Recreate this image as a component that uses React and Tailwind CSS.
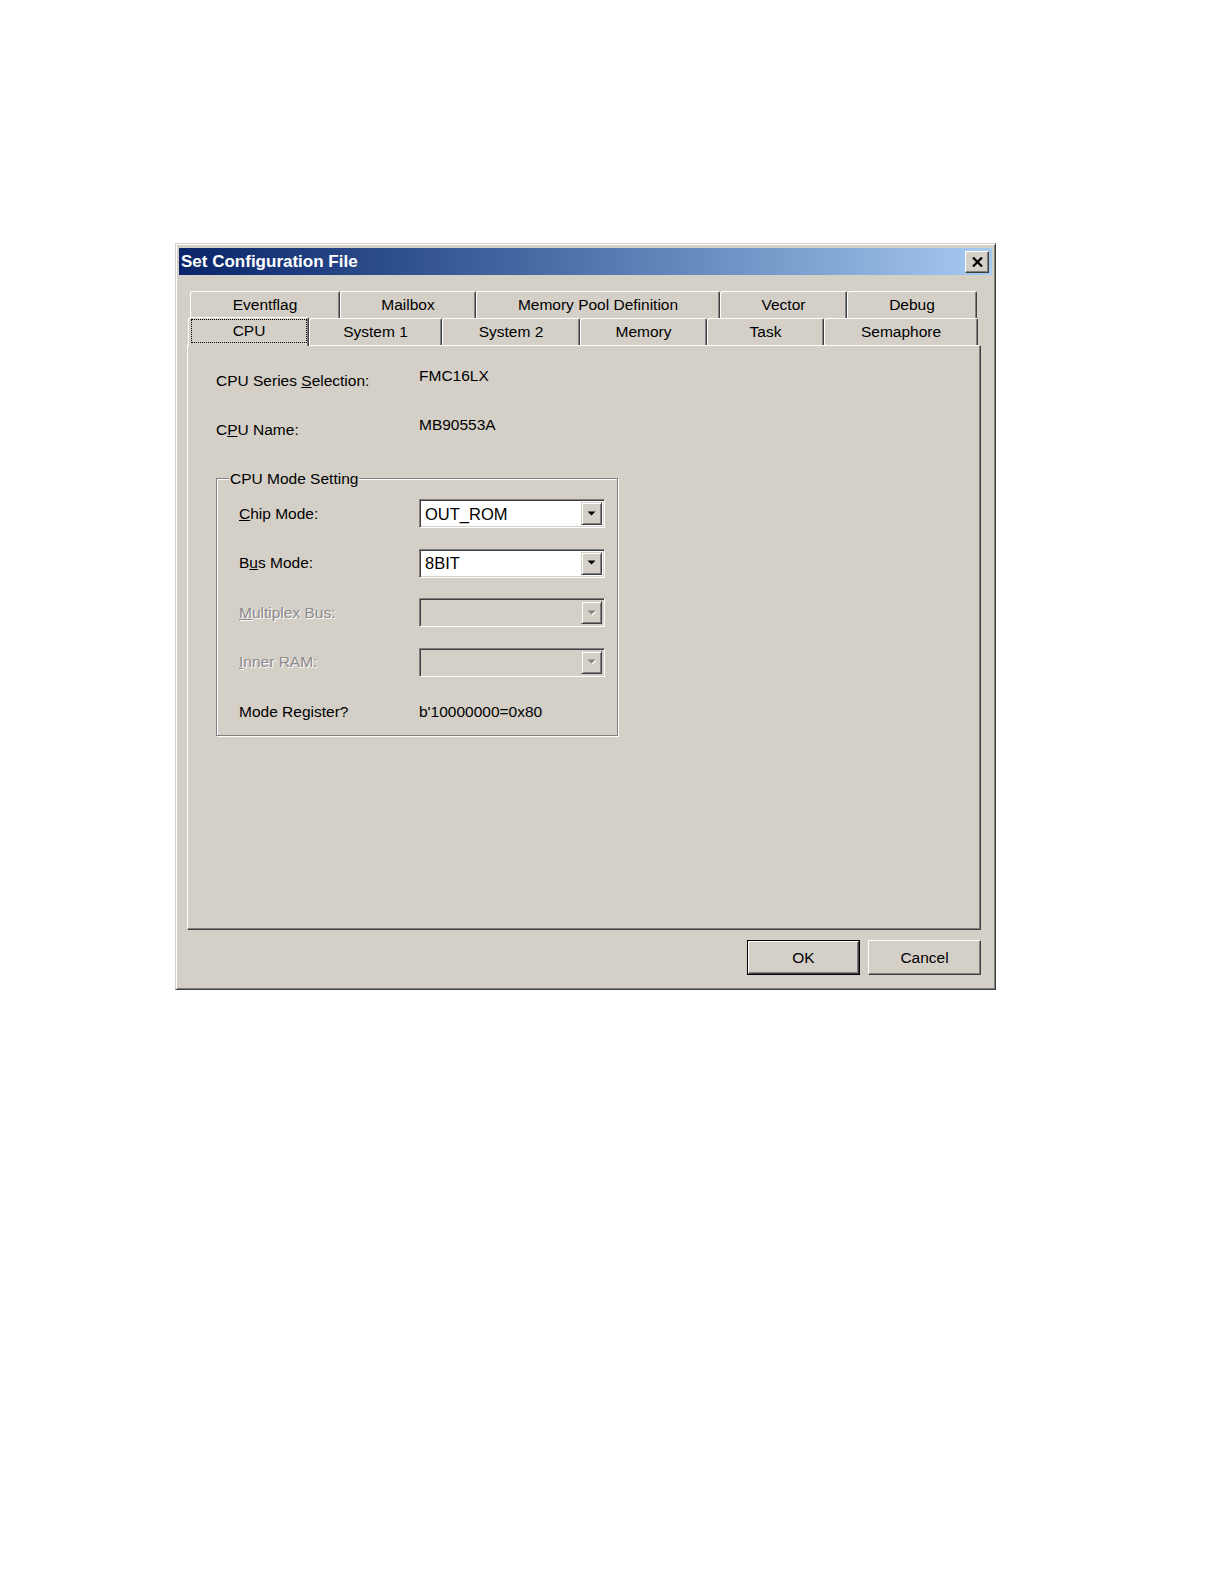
const ROW_BACK = [
  { label: 'Eventflag', w: 150 },
  { label: 'Mailbox', w: 136 },
  { label: 'Memory Pool Definition', w: 244 },
  { label: 'Vector', w: 127 },
  { label: 'Debug', w: 130 },
];

const ROW_FRONT = [
  { label: 'System 1', w: 133 },
  { label: 'System 2', w: 138 },
  { label: 'Memory', w: 127 },
  { label: 'Task', w: 117 },
  { label: 'Semaphore', w: 154 },
];

function Tab({ label, w }) {
  return (
    <div
      className="h-[27px] flex items-center justify-center border-t border-l border-r border-t-white border-l-white border-r-[#404040] rounded-tl-[3px] rounded-tr-[2px] shadow-[inset_-1px_0_0_#808080] bg-[#d4d0c8]"
      style={{ width: w }}
    >
      <span className="pb-[1px]">{label}</span>
    </div>
  );
}

function Arrow({ disabled }) {
  return (
    <svg width="10" height="6" viewBox="0 0 10 6" className="block">
      {disabled && <path d="M1.5 1.5h8L5.5 5.5z" fill="#fff" />}
      <path d="M0.5 0.5h8L4.5 4.5z" fill={disabled ? '#808080' : '#000'} />
    </svg>
  );
}

function Combo({ value, disabled }) {
  return (
    <div
      className={`w-[186px] h-[29px] flex items-stretch border border-t-[#808080] border-l-[#808080] border-b-white border-r-white shadow-[inset_1px_1px_0_#404040,inset_-1px_-1px_0_#d4d0c8] p-[2px] ${disabled ? 'bg-[#d4d0c8]' : 'bg-white'}`}
    >
      <div className="flex-1 flex items-center pl-[3px] text-[16.5px]">{value}</div>
      <div className="w-[21px] flex items-center justify-center bg-[#d4d0c8] border border-t-[#d4d0c8] border-l-[#d4d0c8] border-b-[#404040] border-r-[#404040] shadow-[inset_1px_1px_0_#fff,inset_-1px_-1px_0_#808080]">
        <Arrow disabled={disabled} />
      </div>
    </div>
  );
}

function Btn({ children, def }) {
  return (
    <div className={`w-[113px] h-[35px] ${def ? 'border border-black' : ''}`}>
      <div className="w-full h-full flex items-center justify-center bg-[#d4d0c8] border border-t-white border-l-white border-b-[#404040] border-r-[#404040] shadow-[inset_-1px_-1px_0_#808080]">
        {children}
      </div>
    </div>
  );
}

const dim = 'text-[#8a8a8a] [text-shadow:1px_1px_0_#fff]';

export default function App() {
  return (
    <div className="w-[1224px] h-[1584px] bg-white pt-[243px] pl-[175px] font-['Liberation_Sans',Arial,sans-serif] text-[15.5px] text-black leading-[20px]">
      <div className="w-[821px] h-[747px] bg-[#d4d0c8] border border-t-[#d4d0c8] border-l-[#d4d0c8] border-b-[#404040] border-r-[#404040] shadow-[inset_1px_1px_0_#fff,inset_-1px_-1px_0_#808080] px-[3px] pt-[4px] flex flex-col">
        {/* Title bar */}
        <div className="h-[27px] flex items-center justify-between bg-linear-to-r from-[#0a246a] to-[#a6caf0] pl-[2px] pr-[3px]">
          <span className="text-white font-bold text-[17px]">Set Configuration File</span>
          <div className="w-[24px] h-[22px] flex items-center justify-center bg-[#d4d0c8] border border-t-white border-l-white border-b-[#404040] border-r-[#404040] shadow-[inset_-1px_-1px_0_#808080]">
            <svg width="11" height="10" viewBox="0 0 11 10">
              <path d="M1 0.5l9 9M10 0.5l-9 9" stroke="#000" strokeWidth="2.2" />
            </svg>
          </div>
        </div>

        {/* Body */}
        <div className="pl-[8px] pr-[11px] flex flex-col">
          <div className="mt-[16px] ml-[3px] flex">
            {ROW_BACK.map((t) => <Tab key={t.label} {...t} />)}
          </div>
          <div className="ml-[3px] h-[27px] flex items-end">
            <div className="relative z-10 -ml-[2px] -mb-[1px] w-[121px] h-[29px] bg-[#d4d0c8] border-t border-l border-r border-t-white border-l-white border-r-[#404040] rounded-tl-[3px] rounded-tr-[2px] shadow-[inset_-1px_0_0_#808080] pl-[2px] pr-[1px] pt-[1px]">
              <div className="h-[24px] border border-dotted border-black flex items-center justify-center pb-[1px]">CPU</div>
            </div>
            {ROW_FRONT.map((t) => <Tab key={t.label} {...t} />)}
          </div>

          {/* Panel */}
          <div className="h-[585px] border border-t-white border-l-white border-b-[#404040] border-r-[#404040] shadow-[inset_-1px_-1px_0_#808080] pl-[28px] pt-[20px]">
            <div className="flex items-start">
              <div className="w-[203px] mt-[5px]">CPU Series <u>S</u>election:</div>
              <div>FMC16LX</div>
            </div>
            <div className="flex items-start mt-[24px]">
              <div className="w-[203px] mt-[5px]">C<u>P</u>U Name:</div>
              <div>MB90553A</div>
            </div>

            <div className="mt-[38px] w-[402px] border border-[#808080] shadow-[inset_1px_1px_0_#fff,1px_1px_0_#fff] pb-[9px]">
              <div className="-mt-[10px] ml-[12px] px-[1px] w-fit bg-[#d4d0c8]">CPU Mode Setting</div>
              <div className="mt-[10px] pl-[22px] grid grid-cols-[180px_186px] auto-rows-[29px] gap-y-[20.5px] items-center">
                <div><u>C</u>hip Mode:</div>
                <Combo value="OUT_ROM" />
                <div>B<u>u</u>s Mode:</div>
                <Combo value="8BIT" />
                <div className={dim}><u>M</u>ultiplex Bus:</div>
                <Combo disabled />
                <div className={dim}><u>I</u>nner RAM:</div>
                <Combo disabled />
                <div>Mode Register?</div>
                <div>b'10000000=0x80</div>
              </div>
            </div>
          </div>

          {/* Buttons */}
          <div className="mt-[10px] flex justify-end gap-[8px]">
            <Btn def>OK</Btn>
            <Btn>Cancel</Btn>
          </div>
        </div>
      </div>
    </div>
  );
}
